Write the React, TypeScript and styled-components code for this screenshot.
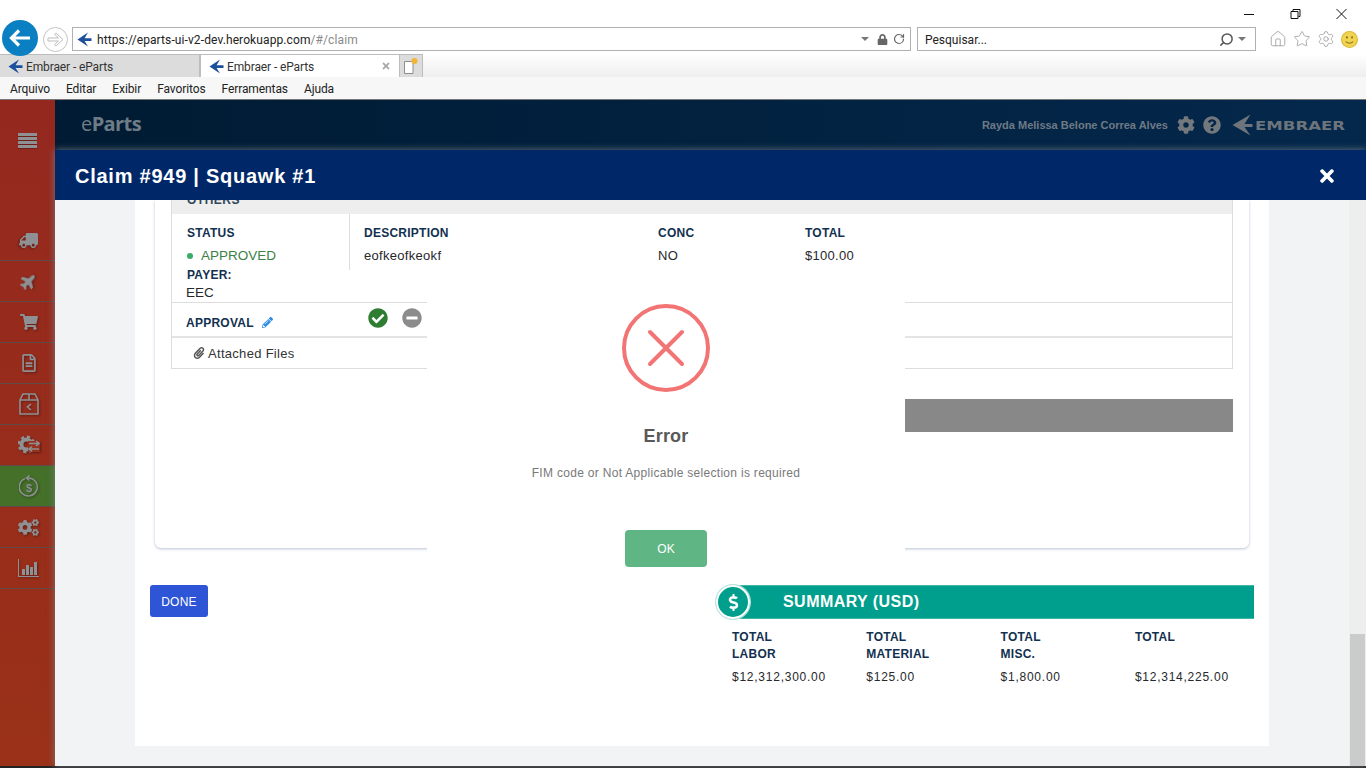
import React from "react";
import styled, { createGlobalStyle } from "styled-components";
import { FaTruck, FaPlane, FaShoppingCart, FaCog, FaCogs, FaQuestionCircle, FaTimes, FaCheckCircle, FaMinusCircle, FaPencilAlt, FaPaperclip, FaDollarSign, FaLock, FaRegFileAlt } from "react-icons/fa";
import { Home, Star, Settings, Search, RotateCw } from "lucide-react";

const GlobalStyle = createGlobalStyle`
  html, body {
    margin: 0;
    padding: 0;
    overflow: hidden;
    background: #fff;
    font-family: "Liberation Sans", Arial, sans-serif;
  }
  * { box-sizing: border-box; }
`;

const chromeFont = `Roboto, "Noto Sans", sans-serif`;

function Favicon() {
  return (
    <svg width="15" height="15" viewBox="0 0 15 15">
      <path d="M11 0.5 L0.5 7.5 L11 14.5 L7.6 9 L14.5 9 L14.5 6.2 L7.6 6.2 Z" fill="#1c4f9c" />
    </svg>
  );
}

function Smiley() {
  return (
    <svg width="17" height="17" viewBox="0 0 16 16">
      <circle cx="8" cy="8" r="7.5" fill="#f2d350" stroke="#d8b93a" />
      <circle cx="5.6" cy="6" r="1" fill="#8a7420" />
      <circle cx="10.4" cy="6" r="1" fill="#8a7420" />
      <path d="M4.5 10 Q8 13 11.5 10" fill="none" stroke="#8a7420" />
    </svg>
  );
}

function NewTabGlyph() {
  return (
    <svg width="16" height="18" viewBox="0 0 16 18">
      <path d="M1.5 4.5 H10 V16.5 H1.5 Z" fill="#fff" stroke="#8f8f8f" />
      <circle cx="11.5" cy="4" r="3" fill="#f5b335" />
    </svg>
  );
}

function ForwardGlyph() {
  return (
    <svg width="17" height="15" viewBox="0 0 17 15" fill="#fff" stroke="#bdbdbd">
      <path d="M9 1 L16 7.5 L9 14 L7.6 12.6 L11.4 9 H1 V6 H11.4 L7.6 2.4 Z" />
    </svg>
  );
}

function BurgerIcon() {
  return (
    <svg width="19" height="15" viewBox="0 0 19 15">
      <path d="M0 0h19v3H0zM0 4h19v3H0zM0 8h19v3H0zM0 12h19v3H0z" fill="currentColor" />
    </svg>
  );
}

function BoxReturnIcon() {
  return (
    <svg width="20" height="22" viewBox="0 0 20 22" fill="none" stroke="currentColor" strokeWidth="1.6">
      <path d="M1 7 L4 1 H16 L19 7 V21 H1 Z" />
      <path d="M1 7 H19 M10 1 V7" />
      <path d="M12 11 L8.5 14 L12 17" />
    </svg>
  );
}

function GearSwapIcon() {
  return (
    <svg width="22" height="20" viewBox="0 0 22 20" fill="none" stroke="currentColor">
      <circle cx="8.5" cy="9.5" r="5" strokeWidth="4" />
      <circle cx="8.5" cy="9.5" r="7.6" strokeWidth="2.6" strokeDasharray="3.2 2.8" />
      <rect x="10" y="6" width="12" height="11" fill="#97301c" stroke="none" />
      <path d="M11 8.5H21M18 6L21 8.5L18 11M21 14H11M14 11.5L11 14L14 16.5" strokeWidth="1.6" />
    </svg>
  );
}

function RefundIcon() {
  return (
    <svg width="20" height="22" viewBox="0 0 20 22" fill="none" stroke="currentColor" strokeWidth="1.5">
      <path d="M6 3.6 A9 9 0 1 0 10 3 H8" />
      <path d="M10.5 0.5 L7.5 3 L10.5 5.5" />
      <text x="10" y="16.5" textAnchor="middle" fontSize="11" fontWeight="700" fill="currentColor" stroke="none" fontFamily="Liberation Sans">$</text>
    </svg>
  );
}

function ChartIcon() {
  return (
    <svg width="21" height="18" viewBox="0 0 21 18" fill="currentColor">
      <path d="M0 0h1v17h20v1H0z" />
      <path d="M4 10h3v6H4zM8 6h3v10H8zM12 8h3v8h-3zM16 3h3v13h-3z" />
    </svg>
  );
}

function EmbraerLogo() {
  return (
    <svg width="114" height="22" viewBox="0 0 114 22">
      <path d="M18.5 0.5 L0.5 11 L18.5 21.5 L12.5 13 L20.5 13 L20.5 10 L12.5 10 Z" fill="#6d747b" />
      <text x="23" y="16" fontFamily="DejaVu Sans" fontWeight="700" fontSize="13" fill="#6d747b" textLength="90" lengthAdjust="spacingAndGlyphs">EMBRAER</text>
    </svg>
  );
}

const Page = styled.div`
  position: relative;
  width: 1366px;
  height: 768px;
  display: flex;
  flex-direction: column;
  overflow: hidden;
`;

/* browser chrome */
const Chrome = styled.header`
  height: 100px;
  display: flex;
  flex-direction: column;
  font-family: ${chromeFont};
  font-size: 12px;
  color: #222;
  flex: none;
`;

const TitleBar = styled.div`
  height: 27px;
  display: flex;
  justify-content: flex-end;
  align-items: flex-start;
  padding: 8px 19px 0 0;
  gap: 35px;
`;

const WindowGlyph = styled.svg`
  width: 11px;
  height: 12px;
  display: block;
`;

const NavRow = styled.div`
  height: 27px;
  display: flex;
  align-items: flex-start;
  padding-left: 2px;
`;

const BackButton = styled.div`
  width: 36px;
  height: 36px;
  margin-top: -7px;
  border-radius: 50%;
  background: #0a7fc1;
  color: #fff;
  display: flex;
  align-items: center;
  justify-content: center;
  position: relative;
  z-index: 1;
  flex: none;
`;

const ForwardButton = styled.div`
  width: 25px;
  height: 25px;
  margin: 0 4px 0 5px;
  border-radius: 50%;
  border: 1px solid #c4c4c4;
  display: flex;
  align-items: center;
  justify-content: center;
  flex: none;
`;

const UrlBox = styled.div`
  width: 839px;
  height: 24px;
  border: 1px solid #b0b0b0;
  display: flex;
  align-items: center;
  padding: 0 5px 0 4px;
  gap: 8px;
  flex: none;
  white-space: nowrap;
`;

const SearchBox = styled(UrlBox)`
  width: 339px;
  margin-left: 6px;
  padding: 0 9px 0 6px;
  gap: 4px;
`;

const UrlText = styled.span`
  flex: 1;
  color: #222;
  padding: 2px 0 0 1px;
  margin-left: -4px;
  letter-spacing: 0.1px;
`;

const SearchText = styled.span`
  flex: 1;
  color: #222;
  padding: 2px 0 0 1px;
`;

const UrlFaded = styled.span`
  color: #8a8a8a;
`;

const CaretDown = styled.span`
  width: 0;
  height: 0;
  border-left: 4px solid transparent;
  border-right: 4px solid transparent;
  border-top: 4px solid #777;
`;

const LockGlyph = styled(FaLock)`
  margin-right: -3px;
`;

const MirroredSearch = styled(Search)`
  transform: scaleX(-1);
`;

const ToolIcons = styled.div`
  display: flex;
  align-items: center;
  gap: 6px;
  margin-left: 13px;
  height: 24px;
  color: #a4a4a4;
`;

const TabRow = styled.div`
  height: 23px;
  display: flex;
  background: linear-gradient(#fff, #eee);
`;

const Tab = styled.div<{ $active?: boolean }>`
  width: 200px;
  display: flex;
  align-items: center;
  gap: 3px;
  padding: 0 8px;
  background: ${(p) => (p.$active ? "#fff" : "#dcdcdc")};
  border: 1px solid #bdbdbd;
  border-left-width: ${(p) => (p.$active ? "1px" : "0")};
  border-bottom: none;
  color: #333;
`;

const TabTitle = styled.span`
  flex: 1;
  padding-top: 2px;
  letter-spacing: -0.12px;
`;

const NewTab = styled.div`
  width: 23px;
  background: #dcdcdc;
  border: 1px solid #bdbdbd;
  border-left: none;
  border-bottom: none;
  display: flex;
  align-items: center;
  justify-content: center;
`;

const MenuBar = styled.nav`
  height: 23px;
  background: #f7f7f7;
  border-bottom: 1px solid #777;
  display: flex;
  align-items: center;
  gap: 16px;
  padding: 1px 0 0 10px;
  letter-spacing: -0.1px;
`;

/* app */
const AppShell = styled.div`
  flex: 1;
  display: flex;
  min-height: 0;
`;

const BottomEdge = styled.div`
  height: 2px;
  background: #222;
  flex: none;
`;

const Sidebar = styled.aside`
  width: 55px;
  flex: none;
  background: linear-gradient(#94281f, #9a3118);
  display: flex;
  flex-direction: column;
  color: #8e9093;
`;

const Burger = styled.div`
  height: 120px;
  display: flex;
  justify-content: center;
  padding-top: 33px;
  svg { filter: drop-shadow(0 1px 0 rgba(0, 0, 0, 0.25)); }
`;

const SideItem = styled.div<{ $active?: boolean }>`
  height: 41px;
  display: flex;
  align-items: center;
  justify-content: center;
  padding-left: 2px;
  border-bottom: 1px solid #5f4a46;
  background: ${(p) => (p.$active ? "#44702a" : "transparent")};
  svg { filter: drop-shadow(1px 1px 1px rgba(0, 0, 0, 0.35)); }
`;

const LeftTruck = styled(FaTruck)`
  transform: scaleX(-1);
`;

const TiltedPlane = styled(FaPlane)`
  transform: rotate(-45deg);
`;

const Main = styled.main`
  flex: 1;
  display: flex;
  flex-direction: column;
  min-width: 0;
`;

const TopBar = styled.div`
  height: 50px;
  flex: none;
  background: linear-gradient(90deg, #001b33, #04284c);
  display: flex;
  align-items: center;
  padding: 0 20px 0 26px;
  color: #6f7a85;
`;

const Brand = styled.div`
  font-family: "Open Sans", sans-serif;
  font-size: 20px;
  font-weight: 700;
  letter-spacing: -0.6px;
  flex: 1;
  padding-bottom: 4px;
  color: #6f7c86;
  span { font-weight: 400; }
`;

const UserName = styled.div`
  font-size: 11px;
  font-weight: 700;
  margin-right: 5px;
`;

const TopIcon = styled.div`
  width: 26px;
  display: flex;
  justify-content: center;
  color: #73787d;
`;

const LogoWrap = styled.div`
  margin-left: 7px;
  display: flex;
`;

const ModalPane = styled.section`
  flex: 1;
  min-height: 0;
  display: flex;
  flex-direction: column;
  position: relative;
  box-shadow: 0 0 7px rgba(125, 130, 135, 0.85);
`;

const ModalBar = styled.div`
  height: 50px;
  flex: none;
  background: #002868;
  color: #fff;
  display: flex;
  align-items: center;
  justify-content: space-between;
  padding: 2px 29px 0 20px;
  position: relative;
  z-index: 1;
`;

const ModalTitle = styled.h1`
  margin: 0;
  font-size: 20px;
  font-weight: 700;
  letter-spacing: 0.75px;
`;

const ModalBody = styled.div`
  flex: 1;
  min-height: 0;
  background: #f2f3f5;
  display: flex;
  align-items: flex-start;
  padding-left: 80px;
  overflow: hidden;
`;

const Sheet = styled.div`
  width: 1134px;
  height: 546px;
  background: #fff;
  flex: none;
  display: flex;
  flex-direction: column;
`;

const ScrollTrack = styled.div`
  width: 17px;
  align-self: stretch;
  margin-left: auto;
  padding-left: 1px;
  background: #eeeeee;
  display: flex;
  align-items: flex-end;
`;

const ScrollThumb = styled.div`
  width: 15px;
  height: 132px;
  background: #cbcbcb;
`;

const Card = styled.div`
  margin: 0 20px;
  height: 348px;
  padding: 0 16px;
  border-radius: 0 0 6px 6px;
  box-shadow: 0 1px 3px rgba(60, 80, 140, 0.35);
  background: #fff;
  flex: none;
`;

const Panel = styled.div`
  border: 1px solid #dddddd;
  border-top: none;
`;

const PanelHead = styled.div`
  height: 14px;
  background: #eeeeee;
  display: flex;
  align-items: flex-end;
  padding-left: 15px;
  overflow: hidden;
  font-size: 12px;
  font-weight: 700;
  letter-spacing: 0.5px;
  color: #33475b;
  line-height: 14px;
  span { position: relative; top: -7px; }
`;

const ItemGrid = styled.div`
  display: grid;
  grid-template-columns: 178px 308px 147px 1fr;
  height: 88px;
`;

const StatusCol = styled.div`
  height: 56px;
  border-right: 1px solid #dddddd;
  padding: 12px 0 0 15px;
`;

const ItemCol = styled.div`
  padding: 12px 0 0 14px;
`;

const ValueCol = styled.div`
  padding-top: 12px;
`;

const FieldLabel = styled.div`
  font-size: 12px;
  font-weight: 700;
  letter-spacing: 0.25px;
  line-height: 14px;
  color: #12304f;
`;

const FieldValue = styled.div`
  font-size: 13px;
  letter-spacing: 0.3px;
  line-height: 14px;
  margin-top: 9px;
  color: #26282b;
`;

const StatusLine = styled.div`
  display: flex;
  align-items: center;
  gap: 8px;
  margin-top: 8px;
  font-size: 13.5px;
  line-height: 16px;
  color: #3c8046;
`;

const Dot = styled.i`
  width: 6px;
  height: 6px;
  border-radius: 50%;
  background: #3cab67;
`;

const PayerBlock = styled.div`
  grid-column: 1 / -1;
  margin-top: -56px;
  padding: 52px 0 0 15px;
  pointer-events: none;
`;

const PayerValue = styled.div`
  font-size: 13.5px;
  line-height: 16px;
  color: #26282b;
  margin: 3px 0 0 -1px;
`;

const ApprovalRow = styled.div`
  height: 34px;
  border-top: 1px solid #dddddd;
  display: grid;
  grid-template-columns: 182px 34px 34px;
  align-items: center;
  padding-left: 14px;
`;

const ApprovalLabel = styled(FieldLabel)`
  display: flex;
  align-items: center;
  gap: 8px;
  padding-top: 6px;
  svg { color: #2c8bea; }
`;

const RoundAction = styled.div<{ $color: string }>`
  display: flex;
  padding-bottom: 3px;
  color: ${(p) => p.$color};
`;

const AttachRow = styled.div`
  height: 32px;
  border-top: 2px solid #e4e4e4;
  display: flex;
  align-items: center;
  padding-left: 21px;
  gap: 3px;
  font-size: 13px;
  letter-spacing: 0.3px;
  color: #333;
`;

const GreyBar = styled.div`
  height: 33px;
  margin: 30px 0 0 300px;
  background: #888888;
`;

const FooterRow = styled.div`
  display: flex;
  justify-content: space-between;
  align-items: flex-start;
  padding: 0 15px;
  margin-top: 37px;
`;

const DoneButton = styled.button`
  width: 58px;
  height: 32px;
  border: none;
  border-radius: 3px;
  padding: 1px 0 0;
  background: #2d55d6;
  color: #fff;
  font-family: inherit;
  font-size: 12px;
  letter-spacing: 0.2px;
`;

const Summary = styled.div`
  width: 538px;
`;

const SummaryHead = styled.div`
  height: 34px;
  background: #009e8c;
  border-top: 1px solid #3fb5a6;
  border-bottom: 1px solid #3fb5a6;
  border-radius: 17px 0 0 17px;
  display: flex;
  align-items: center;
  color: #fff;
  font-size: 16px;
  font-weight: 700;
  letter-spacing: 0.45px;
`;

const SummaryBadge = styled.div`
  width: 34px;
  height: 34px;
  border-radius: 50%;
  border: 2px solid #fff;
  box-shadow: 0 0 0 1px #b7e3dd;
  display: flex;
  align-items: center;
  justify-content: center;
  margin-right: 33px;
`;

const SummaryGrid = styled.div`
  display: grid;
  grid-template-columns: repeat(4, 134.3px);
  padding: 10px 0 0 16px;
`;

const SummaryLabel = styled(FieldLabel)`
  line-height: 17px;
  height: 34px;
`;

const SummaryValue = styled(FieldValue)`
  font-size: 12px;
  margin-top: 7px;
  letter-spacing: 0.75px;
`;

/* alert */
const AlertBox = styled.div`
  position: absolute;
  left: 427px;
  top: 280px;
  width: 478px;
  height: 302px;
  background: #fff;
  display: flex;
  flex-direction: column;
  align-items: center;
  padding-top: 24px;
  z-index: 5;
`;

const AlertIcon = styled.svg`
  width: 88px;
  height: 88px;
  display: block;
`;

const AlertTitle = styled.h2`
  margin: 35px 0 0;
  font-size: 18px;
  line-height: 18px;
  font-weight: 700;
  letter-spacing: 0.2px;
  color: #595959;
`;

const AlertText = styled.p`
  margin: 21px 0 0;
  font-size: 12px;
  line-height: 14px;
  letter-spacing: 0.3px;
  color: #797979;
`;

const AlertButton = styled.button`
  width: 82px;
  height: 37px;
  margin-top: 50px;
  border: none;
  border-radius: 4px;
  background: #5fb583;
  color: #fff;
  font-family: inherit;
  font-size: 12px;
`;

const summaryRows = [
  { label: ["TOTAL", "LABOR"], value: "$12,312,300.00" },
  { label: ["TOTAL", "MATERIAL"], value: "$125.00" },
  { label: ["TOTAL", "MISC."], value: "$1,800.00" },
  { label: ["TOTAL"], value: "$12,314,225.00" },
];

const menus = ["Arquivo", "Editar", "Exibir", "Favoritos", "Ferramentas", "Ajuda"];

export default function App() {
  return (
    <Page>
      <GlobalStyle />
      <Chrome>
        <TitleBar>
          <WindowGlyph viewBox="0 0 11 12"><path d="M0 6.5h10" stroke="#111" /></WindowGlyph>
          <WindowGlyph viewBox="0 0 11 12" fill="none" stroke="#111"><path d="M1 3.5h7v7H1zM3 3V1.5h7v7H8.5" /></WindowGlyph>
          <WindowGlyph viewBox="0 0 11 12" stroke="#111"><path d="M0.5 1l10 10M10.5 1l-10 10" /></WindowGlyph>
        </TitleBar>
        <NavRow>
          <BackButton>
            <svg width="22" height="18" viewBox="0 0 22 18" fill="none" stroke="#fff" strokeWidth="3.2">
              <path d="M21 9H3M10 1.5L2.5 9l7.5 7.5" />
            </svg>
          </BackButton>
          <ForwardButton><ForwardGlyph /></ForwardButton>
          <UrlBox>
            <Favicon />
            <UrlText>https://eparts-ui-v2-dev.herokuapp.com<UrlFaded>/#/claim</UrlFaded></UrlText>
            <CaretDown />
            <LockGlyph size={11} color="#666" />
            <RotateCw size={12} color="#666" strokeWidth={2.4} />
          </UrlBox>
          <SearchBox>
            <SearchText>Pesquisar...</SearchText>
            <MirroredSearch size={15} color="#555" strokeWidth={2.4} />
            <CaretDown />
          </SearchBox>
          <ToolIcons>
            <Home size={18} strokeWidth={1.2} />
            <Star size={18} strokeWidth={1.2} />
            <Settings size={18} strokeWidth={1.2} />
            <Smiley />
          </ToolIcons>
        </NavRow>
        <TabRow>
          <Tab><Favicon /><TabTitle>Embraer - eParts</TabTitle></Tab>
          <Tab $active><Favicon /><TabTitle>Embraer - eParts</TabTitle><FaTimes size={10} color="#a8a8a8" /></Tab>
          <NewTab><NewTabGlyph /></NewTab>
        </TabRow>
        <MenuBar>
          {menus.map((m) => <span key={m}>{m}</span>)}
        </MenuBar>
      </Chrome>

      <AppShell>
        <Sidebar>
          <Burger><BurgerIcon /></Burger>
          <SideItem><LeftTruck size={19} /></SideItem>
          <SideItem><TiltedPlane size={17} /></SideItem>
          <SideItem><FaShoppingCart size={18} /></SideItem>
          <SideItem><FaRegFileAlt size={18} /></SideItem>
          <SideItem><BoxReturnIcon /></SideItem>
          <SideItem><GearSwapIcon /></SideItem>
          <SideItem $active><RefundIcon /></SideItem>
          <SideItem><FaCogs size={21} /></SideItem>
          <SideItem><ChartIcon /></SideItem>
        </Sidebar>
        <Main>
          <TopBar>
            <Brand><span>e</span>Parts</Brand>
            <UserName>Rayda Melissa Belone Correa Alves</UserName>
            <TopIcon><FaCog size={18} /></TopIcon>
            <TopIcon><FaQuestionCircle size={18} /></TopIcon>
            <LogoWrap><EmbraerLogo /></LogoWrap>
          </TopBar>
          <ModalPane>
            <ModalBar>
              <ModalTitle>Claim #949 | Squawk #1</ModalTitle>
              <FaTimes size={20} />
            </ModalBar>
            <ModalBody>
              <Sheet>
                <Card>
                  <Panel>
                    <PanelHead><span>OTHERS</span></PanelHead>
                    <ItemGrid>
                      <StatusCol>
                        <FieldLabel>STATUS</FieldLabel>
                        <StatusLine><Dot />APPROVED</StatusLine>
                      </StatusCol>
                      <ItemCol>
                        <FieldLabel>DESCRIPTION</FieldLabel>
                        <FieldValue>eofkeofkeokf</FieldValue>
                      </ItemCol>
                      <ValueCol>
                        <FieldLabel>CONC</FieldLabel>
                        <FieldValue>NO</FieldValue>
                      </ValueCol>
                      <ValueCol>
                        <FieldLabel>TOTAL</FieldLabel>
                        <FieldValue>$100.00</FieldValue>
                      </ValueCol>
                      <PayerBlock>
                        <FieldLabel>PAYER:</FieldLabel>
                        <PayerValue>EEC</PayerValue>
                      </PayerBlock>
                    </ItemGrid>
                    <ApprovalRow>
                      <ApprovalLabel>APPROVAL <FaPencilAlt size={11} /></ApprovalLabel>
                      <RoundAction $color="#2e7d32"><FaCheckCircle size={20} /></RoundAction>
                      <RoundAction $color="#8c8c8c"><FaMinusCircle size={20} /></RoundAction>
                    </ApprovalRow>
                    <AttachRow><FaPaperclip size={12} color="#555" />Attached Files</AttachRow>
                  </Panel>
                  <GreyBar />
                </Card>
                <FooterRow>
                  <DoneButton>DONE</DoneButton>
                  <Summary>
                    <SummaryHead>
                      <SummaryBadge><FaDollarSign size={17} /></SummaryBadge>
                      SUMMARY (USD)
                    </SummaryHead>
                    <SummaryGrid>
                      {summaryRows.map((r) => (
                        <div key={r.value}>
                          <SummaryLabel>{r.label.map((l) => <div key={l}>{l}</div>)}</SummaryLabel>
                          <SummaryValue>{r.value}</SummaryValue>
                        </div>
                      ))}
                    </SummaryGrid>
                  </Summary>
                </FooterRow>
              </Sheet>
              <ScrollTrack><ScrollThumb /></ScrollTrack>
            </ModalBody>
          </ModalPane>
        </Main>
      </AppShell>
      <BottomEdge />

      <AlertBox>
        <AlertIcon viewBox="0 0 88 88" fill="none" stroke="#f27474">
          <circle cx="44" cy="44" r="42" strokeWidth="4" />
          <path d="M28 28L60 60M60 28L28 60" strokeWidth="4" strokeLinecap="round" />
        </AlertIcon>
        <AlertTitle>Error</AlertTitle>
        <AlertText>FIM code or Not Applicable selection is required</AlertText>
        <AlertButton>OK</AlertButton>
      </AlertBox>
    </Page>
  );
}
